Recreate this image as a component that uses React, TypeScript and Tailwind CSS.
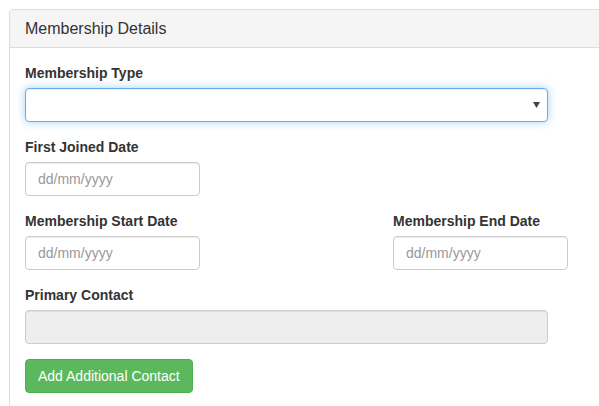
import React from "react";

const font = { fontFamily: '"Liberation Sans", Arial, sans-serif' };

function Field({ label, children }: { label: string; children: React.ReactNode }) {
  return (
    <div className="mb-[15px]">
      <label className="mb-[5px] block text-[14px] font-bold leading-5 text-[#333]">{label}</label>
      {children}
    </div>
  );
}

function DateInput() {
  return (
    <input
      type="text"
      placeholder="dd/mm/yyyy"
      className="block h-[34px] w-[175px] rounded-[4px] border border-[#ccc] bg-white px-3 text-[14px] text-[#555] shadow-[inset_0_1px_1px_rgba(0,0,0,0.075)] outline-none placeholder:text-[#999]"
    />
  );
}

export default function App() {
  return (
    <div className="h-screen w-screen overflow-hidden bg-white text-[#333]" style={font}>
      <div className="ml-[9px] mt-[9px] w-[720px] rounded-[4px] border border-[#ddd] bg-white">
        <div className="rounded-t-[3px] border-b border-[#ddd] bg-[#f5f5f5] px-[15px] py-[10px] text-[16px] leading-[17px]">
          Membership Details
        </div>
        <div className="p-[15px]">
          <Field label="Membership Type">
            <div className="relative w-[523px]">
              <select className="block h-[34px] w-full appearance-none rounded-[4px] border border-[#66afe9] bg-white px-3 text-[14px] text-[#555] shadow-[inset_0_1px_1px_rgba(0,0,0,0.075),0_0_8px_rgba(102,175,233,0.6)] outline-none">
                <option value=""></option>
              </select>
              <svg
                className="pointer-events-none absolute right-[8px] top-[14px]"
                width="7"
                height="6"
                viewBox="0 0 7 6"
              >
                <path d="M0 0 H7 L3.5 6 Z" fill="#444" />
              </svg>
            </div>
          </Field>
          <Field label="First Joined Date">
            <DateInput />
          </Field>
          <div className="grid grid-cols-[368px_1fr]">
            <Field label="Membership Start Date">
              <DateInput />
            </Field>
            <Field label="Membership End Date">
              <DateInput />
            </Field>
          </div>
          <Field label="Primary Contact">
            <input
              type="text"
              disabled
              className="block h-[34px] w-[523px] rounded-[4px] border border-[#ccc] bg-[#eee] px-3 text-[14px] shadow-[inset_0_1px_1px_rgba(0,0,0,0.075)]"
            />
          </Field>
          <button
            type="button"
            className="h-[34px] rounded-[4px] border border-[#4cae4c] bg-[#5cb85c] px-3 text-[14px] leading-5 text-white"
          >
            Add Additional Contact
          </button>
        </div>
      </div>
    </div>
  );
}
